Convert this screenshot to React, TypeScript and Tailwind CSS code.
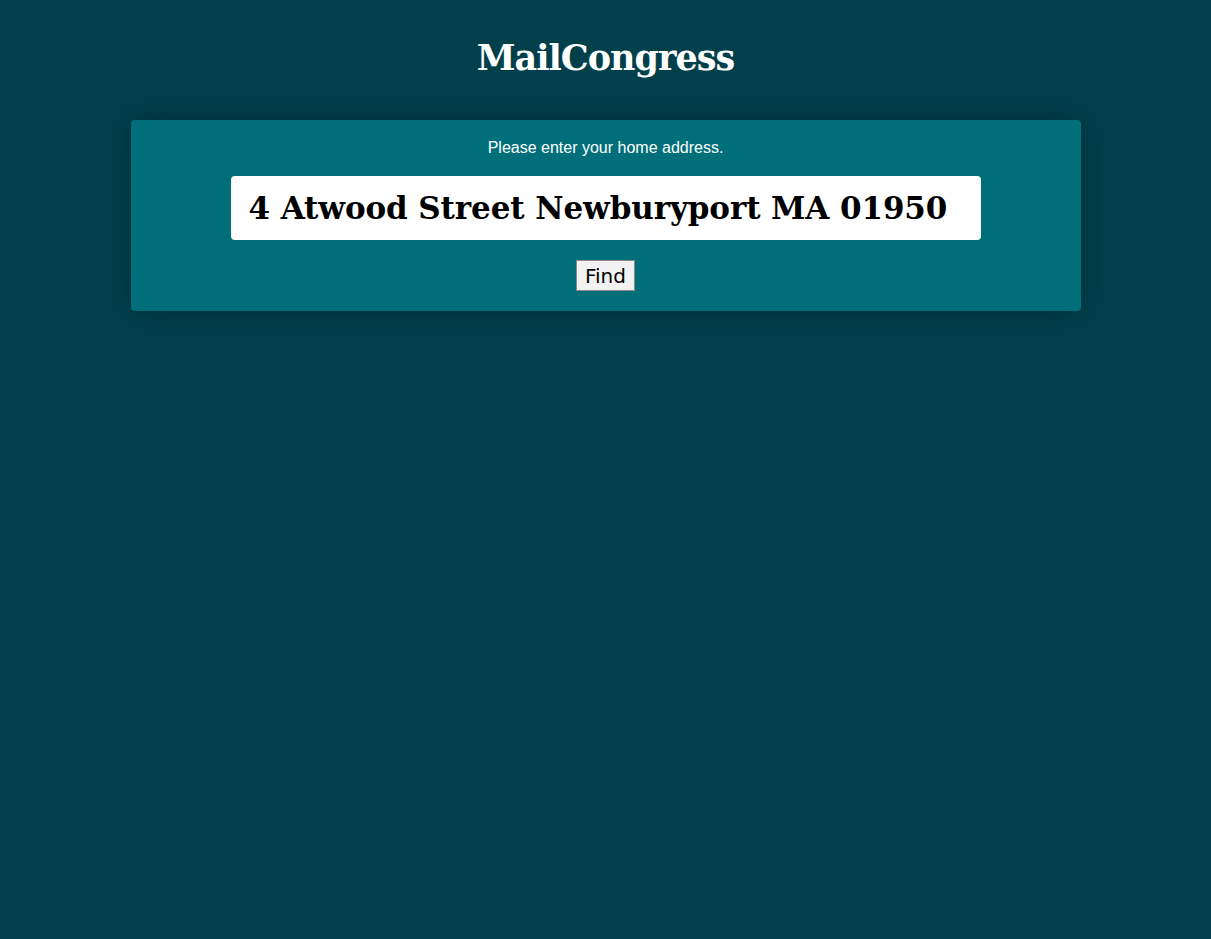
import { useState } from "react";

const App = () => {
  const [address, setAddress] = useState("4 Atwood Street Newburyport MA 01950");

  return (
    <main className="min-h-[939px] w-full bg-[#013f4b] flex flex-col items-center">
      <h1 className="mt-[34px] text-[35px] leading-[48px] font-bold text-white [font-family:'DejaVu_Serif',serif] tracking-[-1px]">
        MailCongress
      </h1>

      <div className="mt-[38px] w-[950px] rounded-[4px] bg-[#016f7a] shadow-[0_0_30px_rgba(0,0,0,0.25)] pt-[18px] pb-[20px] flex flex-col items-center">
        <p className="text-[16px] leading-[20px] text-white [font-family:'Liberation_Sans',Arial,sans-serif]">
          Please enter your home address.
        </p>

        <input
          value={address}
          onChange={(e) => setAddress(e.target.value)}
          className="mt-[18px] h-[64px] w-[750px] rounded-[4px] bg-white px-[18px] text-[31px] font-bold text-black outline-none [font-family:'DejaVu_Serif',serif] tracking-[-0.1px]"
        />

        <button className="mt-[20px] h-[31px] px-[8px] border border-[#8a8a8a] bg-[#f2f2f2] text-[20px] leading-[26px] text-black [font-family:'DejaVu_Sans',sans-serif]">
          Find
        </button>
      </div>
    </main>
  );
};

export default App;
